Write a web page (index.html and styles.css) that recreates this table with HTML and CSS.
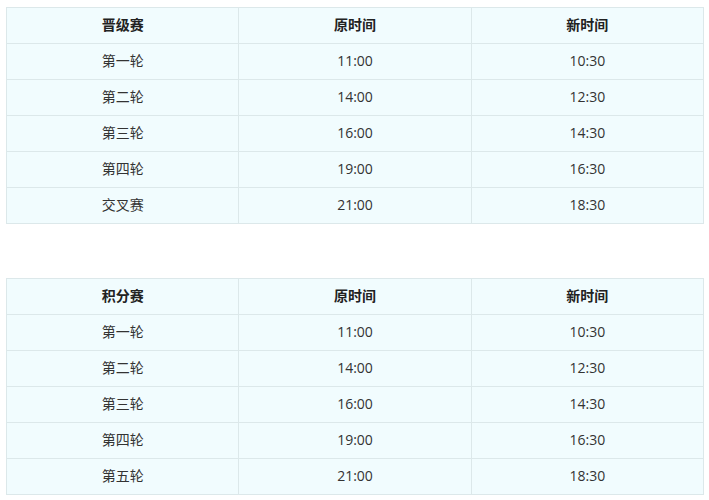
FILE: index.html
```html
<!DOCTYPE html>
<html lang="zh">
<head>
<meta charset="utf-8">
<link rel="stylesheet" href="styles.css">
</head>
<body>
<div class="page">
  <table class="sched">
    <thead><tr><th>晋级赛</th><th>原时间</th><th>新时间</th></tr></thead>
    <tbody>
      <tr><td>第一轮</td><td>11:00</td><td>10:30</td></tr>
      <tr><td>第二轮</td><td>14:00</td><td>12:30</td></tr>
      <tr><td>第三轮</td><td>16:00</td><td>14:30</td></tr>
      <tr><td>第四轮</td><td>19:00</td><td>16:30</td></tr>
      <tr><td>交叉赛</td><td>21:00</td><td>18:30</td></tr>
    </tbody>
  </table>
  <table class="sched">
    <thead><tr><th>积分赛</th><th>原时间</th><th>新时间</th></tr></thead>
    <tbody>
      <tr><td>第一轮</td><td>11:00</td><td>10:30</td></tr>
      <tr><td>第二轮</td><td>14:00</td><td>12:30</td></tr>
      <tr><td>第三轮</td><td>16:00</td><td>14:30</td></tr>
      <tr><td>第四轮</td><td>19:00</td><td>16:30</td></tr>
      <tr><td>第五轮</td><td>21:00</td><td>18:30</td></tr>
    </tbody>
  </table>
</div>
</body>
</html>
```
FILE: styles.css
```css
html, body { margin: 0; padding: 0; background: #fff; }
body {
  font-family: "Open Sans", "Noto Sans CJK SC", sans-serif;
  font-size: 14px;
  color: #333;
}
.page {
  padding: 7px 5px 0 6px;
  display: flex;
  flex-direction: column;
  gap: 54px;
}
.sched {
  width: 698px;
  border-collapse: collapse;
  table-layout: fixed;
  background: #f1fcfe;
}
.sched th, .sched td {
  border: 1px solid #dce8ea;
  height: 33px;
  padding: 0 0 2px;
  text-align: center;
  vertical-align: middle;
  line-height: 20px;
}
.sched th { font-weight: bold; color: #222; }
```
